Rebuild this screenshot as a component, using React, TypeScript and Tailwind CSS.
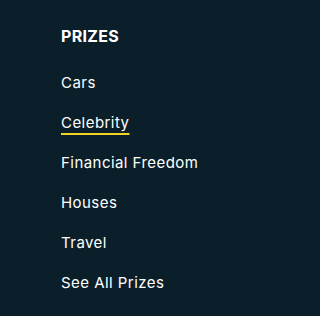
import React from "react";

const items = ["Cars", "Celebrity", "Financial Freedom", "Houses", "Travel", "See All Prizes"];

export default function App() {
  return (
    <div className="w-full min-h-screen bg-[#0b1f2a] text-white pl-[61px] pt-[26px]" style={{ fontFamily: "Inter, 'Noto Sans', sans-serif" }}>
      <h3 className="text-[16px] font-bold leading-[20px] tracking-[0.3px]">PRIZES</h3>
      <ul className="mt-[27px] flex flex-col gap-[20px]">
        {items.map((it) => (
          <li key={it} className="text-[15px] leading-[20px] tracking-[0.45px]">
            <a className={it === "Celebrity" ? "underline decoration-[#f5d21f] decoration-[1.5px] underline-offset-[5px]" : ""}>{it}</a>
          </li>
        ))}
      </ul>
    </div>
  );
}
